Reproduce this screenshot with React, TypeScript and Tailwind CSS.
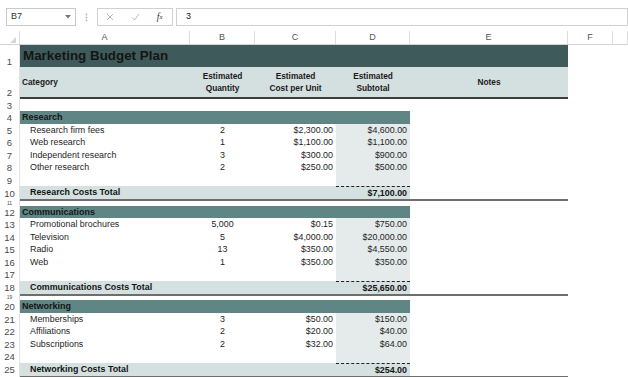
import React from 'react';

const cols = 'grid grid-cols-[20px_170px_65px_81px_74px_158px_45px_1fr]';

type Item = { label: string; qty: string; cost: string; sub: string };

const sections: { title: string; total: string; totalLabel: string; items: Item[] }[] = [
  {
    title: 'Research',
    totalLabel: 'Research Costs Total',
    total: '$7,100.00',
    items: [
      { label: 'Research firm fees', qty: '2', cost: '$2,300.00', sub: '$4,600.00' },
      { label: 'Web research', qty: '1', cost: '$1,100.00', sub: '$1,100.00' },
      { label: 'Independent research', qty: '3', cost: '$300.00', sub: '$900.00' },
      { label: 'Other research', qty: '2', cost: '$250.00', sub: '$500.00' },
    ],
  },
  {
    title: 'Communications',
    totalLabel: 'Communications Costs Total',
    total: '$25,650.00',
    items: [
      { label: 'Promotional brochures', qty: '5,000', cost: '$0.15', sub: '$750.00' },
      { label: 'Television', qty: '5', cost: '$4,000.00', sub: '$20,000.00' },
      { label: 'Radio', qty: '13', cost: '$350.00', sub: '$4,550.00' },
      { label: 'Web', qty: '1', cost: '$350.00', sub: '$350.00' },
    ],
  },
  {
    title: 'Networking',
    totalLabel: 'Networking Costs Total',
    total: '$254.00',
    items: [
      { label: 'Memberships', qty: '3', cost: '$50.00', sub: '$150.00' },
      { label: 'Affiliations', qty: '2', cost: '$20.00', sub: '$40.00' },
      { label: 'Subscriptions', qty: '2', cost: '$32.00', sub: '$64.00' },
    ],
  },
];

const RowNum = ({ n, lift }: { n: number; lift?: boolean }) => (
  <div className={`flex items-end justify-center overflow-hidden border-r border-[#e3e3e3] text-[9.5px] leading-[11.5px] text-[#4a4a4a] ${lift ? 'pb-[2px]' : ''}`}>
    {n}
  </div>
);

const App = () => {
  let r = 4;
  const rows: React.ReactNode[] = [];

  sections.forEach((s, si) => {
    // section header
    rows.push(
      <div key={`h${si}`} className={`${cols} h-[12.5px]`}>
        <RowNum n={r++} />
        <div className="col-span-4 bg-[#5f8585] pl-[2px] text-[9px] font-bold leading-[12.5px] text-[#141414]">{s.title}</div>
      </div>
    );
    s.items.forEach((it, ii) => {
      rows.push(
        <div key={`i${si}-${ii}`} className={`${cols} h-[12.5px] text-[8.9px] leading-[12.5px] text-[#1e1e1e]`}>
          <RowNum n={r++} />
          <div className="pl-[10px]">{it.label}</div>
          <div className="text-center">{it.qty}</div>
          <div className="pr-[3px] text-right">{it.cost}</div>
          <div className="bg-[#e5ebeb] pr-[3px] text-right">{it.sub}</div>
        </div>
      );
    });
    // blank row
    rows.push(
      <div key={`b${si}`} className={`${cols} h-[12.5px]`}>
        <RowNum n={r++} />
        <div />
        <div />
        <div />
        <div className="bg-[#e5ebeb]" />
      </div>
    );
    // total row
    rows.push(
      <div key={`t${si}`} className={`${cols} h-[14.5px]`}>
        <RowNum n={r++} lift />
        <div className="col-span-5 grid grid-cols-[170px_65px_81px_74px_158px] border-b-2 border-[#6e6e6e] text-[8.9px] font-bold leading-[12px] text-[#141414]">
          <div className="bg-[#d5e0e0] pl-[10px]">{s.totalLabel}</div>
          <div className="bg-[#d5e0e0]" />
          <div className="bg-[#d5e0e0]" />
          <div className="border-t border-dashed border-[#222] bg-[#d5e0e0] pr-[3px] text-right">{s.total}</div>
          <div />
        </div>
      </div>
    );
    if (si < sections.length - 1) {
      rows.push(
        <div key={`g${si}`} className={`${cols} h-[5px]`}>
          <div className="flex items-center justify-center overflow-hidden border-r border-[#e3e3e3] text-[5px] leading-[5px] text-[#4a4a4a]">{r++}</div>
        </div>
      );
    }
  });

  return (
    <div className="h-[377px] w-[628px] overflow-hidden bg-white font-['Liberation_Sans',Arial,sans-serif]">
      {/* formula bar */}
      <div className="flex h-[31px] items-start gap-0 pt-[8px] pl-[6px]">
        <div className="flex h-[18px] w-[70px] items-center justify-between border border-[#c9c9c9] pl-[4px] pr-[4px] text-[9px] text-[#333]">
          <span>B7</span>
          <svg width="6" height="4" viewBox="0 0 6 4"><path d="M0 0h6L3 3.5z" fill="#777" /></svg>
        </div>
        <div className="flex h-[18px] w-[21px] items-center justify-center">
          <svg width="3" height="9" viewBox="0 0 3 9">
            <circle cx="1.5" cy="1.5" r="0.9" fill="#b5b5b5" />
            <circle cx="1.5" cy="4.5" r="0.9" fill="#b5b5b5" />
            <circle cx="1.5" cy="7.5" r="0.9" fill="#b5b5b5" />
          </svg>
        </div>
        <div className="flex h-[18px] w-[76px] items-center border border-[#d0d0d0]">
          <div className="flex w-[25px] justify-center">
            <svg width="8" height="8" viewBox="0 0 8 8"><path d="M1 1l6 6M7 1L1 7" stroke="#b8b8b8" strokeWidth="1" /></svg>
          </div>
          <div className="flex w-[25px] justify-center">
            <svg width="9" height="8" viewBox="0 0 9 8"><path d="M1 4.5l2.5 2.5L8 1" stroke="#b8b8b8" strokeWidth="1" fill="none" /></svg>
          </div>
          <div className="flex w-[25px] justify-center font-['Liberation_Serif',serif] text-[9.5px] italic text-[#333]">
            f<span className="text-[7px] leading-[14px]">x</span>
          </div>
        </div>
        <div className="ml-[3px] flex h-[18px] flex-1 items-center border border-[#d0d0d0] pl-[9px] text-[9px] text-[#222]">3</div>
      </div>

      {/* column headers */}
      <div className={`${cols} h-[14px] border-b border-[#d4d4d4] text-[9px] leading-[13px] text-[#555]`}>
        <div className="flex items-end justify-end border-r border-[#dedede] pb-[1px] pr-[3px]">
          <svg width="6" height="6" viewBox="0 0 6 6"><path d="M6 0v6H0z" fill="#d6d6d6" /></svg>
        </div>
        {['A', 'B', 'C', 'D', 'E', 'F', ''].map((c, i) => (
          <div key={i} className="border-r border-[#dedede] text-center">{c}</div>
        ))}
      </div>

      {/* row 1 */}
      <div className={`${cols} h-[22px]`}>
        <RowNum n={1} />
        <div className="col-span-5 flex items-center bg-[#3f5a5a] pl-[3px] text-[13.4px] font-bold text-[#141414]">
          Marketing Budget Plan
        </div>
      </div>

      {/* row 2 */}
      <div className={`${cols} h-[31.5px]`}>
        <RowNum n={2} />
        <div className="col-span-5 grid grid-cols-[170px_65px_81px_74px_158px] border-b-2 border-[#3e3e3e] bg-[#d4dfdf] pt-[2px] text-[8.3px] font-bold leading-[11.5px] text-[#1a1a1a]">
          <div className="flex items-center pl-[2px]">Category</div>
          <div className="flex flex-col items-center justify-center text-center">
            <span>Estimated</span>
            <span>Quantity</span>
          </div>
          <div className="flex flex-col items-center justify-center text-center">
            <span>Estimated</span>
            <span>Cost per Unit</span>
          </div>
          <div className="flex flex-col items-center justify-center text-center">
            <span>Estimated</span>
            <span>Subtotal</span>
          </div>
          <div className="flex items-center justify-center">Notes</div>
        </div>
      </div>

      {/* row 3 */}
      <div className={`${cols} h-[12.5px]`}>
        <RowNum n={3} />
      </div>

      {rows}
    </div>
  );
};

export default App;
